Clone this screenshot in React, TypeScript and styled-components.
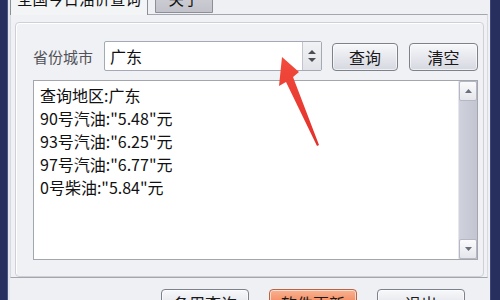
import React from "react";
import styled, { createGlobalStyle } from "styled-components";

const Global = createGlobalStyle`
  html, body { margin: 0; padding: 0; overflow: hidden; background: #eef0f3; }
  * { box-sizing: border-box; }
`;

const FONT = `"Noto Sans CJK SC", "Noto Sans", sans-serif`;

const Root = styled.div`
  position: relative;
  width: 500px;
  height: 300px;
  overflow: hidden;
  font-family: ${FONT};
`;

const Window = styled.div`
  display: flex;
  width: 500px;
  height: 320px;
  margin-top: -14px;
`;

const Frame = styled.div<{ $w: number; $side: "l" | "r" }>`
  width: ${(p) => p.$w}px;
  flex: none;
  background: #262f5e;
  ${(p) =>
    p.$side === "l"
      ? "box-shadow: inset -1px 0 0 #4b5688;"
      : "box-shadow: inset 1px 0 0 #3e4878;"}
`;

const Body = styled.div`
  flex: 1;
  display: flex;
  flex-direction: column;
  background: #eef0f3;
  box-shadow: inset 2px 0 0 #e4e6ec;
`;

const TabStrip = styled.div`
  display: flex;
  align-items: flex-end;
  gap: 7px;
  padding-left: 2px;
  height: 28px;
`;

const Tab = styled.div<{ $active?: boolean; $w: number }>`
  position: relative;
  z-index: 1;
  width: ${(p) => p.$w}px;
  height: ${(p) => (p.$active ? 29 : 25)}px;
  margin-bottom: ${(p) => (p.$active ? -1 : 1)}px;
  display: flex;
  justify-content: center;
  padding-top: ${(p) => (p.$active ? 2 : 0)}px;
  font-size: 15.5px;
  line-height: 18px;
  color: #111;
  border: 1px solid #8c8f98;
  border-bottom: ${(p) => (p.$active ? "none" : "1px solid #8c8f98")};
  border-radius: 3px 3px 0 0;
  background: ${(p) =>
    p.$active ? "#f3f4f6" : "linear-gradient(#d3d4da, #c2c3ca)"};
`;

const TabPage = styled.div`
  margin: 0 2px;
  height: 264px;
  border: 1px solid #a3a6ae;
  border-left-color: #d7dae0;
  border-right-color: #d7dae0;
  background: #f0f1f4;
  padding: 7px 3px 0 4px;
`;

const Group = styled.div`
  height: 255px;
  border: 1px solid #cdd0d6;
  border-radius: 4px;
  box-shadow: inset 1px 1px 0 #ffffff;
  padding: 18px 5px 16px 17px;
  display: flex;
  flex-direction: column;
`;

const Row = styled.div`
  display: flex;
  align-items: center;
  height: 30px;
`;

const Label = styled.span`
  width: 71px;
  flex: none;
  font-size: 15px;
  color: #505258;
  line-height: 30px;
  padding-top: 2px;
`;

const Combo = styled.div`
  flex: 1;
  height: 30px;
  display: flex;
  background: #fff;
  border: 1px solid #a4a9b5;
  border-radius: 2px;
`;

const ComboText = styled.span`
  flex: 1;
  padding-left: 5px;
  font-size: 16px;
  line-height: 28px;
  color: #111;
`;

const Spinner = styled.div`
  width: 19px;
  display: flex;
  align-items: center;
  justify-content: center;
  background: linear-gradient(#f1f2f5, #e1e3e8);
  border-left: 1px solid #c2c5cc;
`;

const Btn = styled.button<{ $w: number; $orange?: boolean }>`
  width: ${(p) => p.$w}px;
  height: 28px;
  flex: none;
  font-family: ${FONT};
  font-size: 16px;
  line-height: 26px;
  padding: 0;
  color: #1a1a1a;
  border: 1px solid ${(p) => (p.$orange ? "#b86447" : "#7d818b")};
  border-radius: 4px;
  background: ${(p) =>
    p.$orange
      ? "linear-gradient(#f9b291, #f48a60 50%, #ef6f44)"
      : "linear-gradient(#f7f8fa, #e7e8ee 50%, #d6d8e0)"};
  box-shadow: inset 0 0 0 1px rgba(255, 255, 255, 0.6);
`;

const TopBtns = styled.div`
  display: flex;
  gap: 11px;
  margin-left: 10px;
  padding-top: 2px;
`;

const TextArea = styled.div`
  margin-top: 9px;
  height: 180px;
  display: flex;
  background: #fff;
  border: 1px solid #a3a6ad;
`;

const Lines = styled.div`
  flex: 1;
  padding: 3px 6px;
  font-size: 16px;
  line-height: 23px;
  color: #111;
`;

const ScrollBar = styled.div`
  width: 19px;
  display: flex;
  flex-direction: column;
  background: linear-gradient(90deg, #cfd2dc, #c3c6d2);
  border-left: 1px solid #e6e7ec;
`;

const ScrollBtn = styled.div`
  height: 20px;
  display: flex;
  align-items: center;
  justify-content: center;
  background: linear-gradient(#fbfbfc, #e4e6eb);
  border: 1px solid #b5b8c2;
  border-radius: 2px;
`;

const Track = styled.div`
  flex: 1;
`;

const Footer = styled.div`
  display: flex;
  justify-content: flex-end;
  gap: 20px;
  padding: 11px 25px 0 0;
`;

const Overlay = styled.svg`
  position: absolute;
  left: 0;
  top: 0;
  pointer-events: none;
`;

const Tri = ({ up }: { up?: boolean }) => (
  <svg width="7" height="4" viewBox="0 0 7 4">
    <path d={up ? "M0 4 L3.5 0 L7 4 Z" : "M0 0 L3.5 4 L7 0 Z"} fill="#6b6f7a" />
  </svg>
);

const lines = [
  "查询地区:广东",
  '90号汽油:"5.48"元',
  '93号汽油:"6.25"元',
  '97号汽油:"6.77"元',
  '0号柴油:"5.84"元',
];

export default function App() {
  return (
    <Root>
      <Global />
      <Window>
        <Frame $w={8} $side="l" />
        <Body>
          <TabStrip>
            <Tab $active $w={138}>全国今日油价查询</Tab>
            <Tab $w={58}>关于</Tab>
          </TabStrip>
          <TabPage>
            <Group>
              <Row>
                <Label>省份城市</Label>
                <Combo>
                  <ComboText>广东</ComboText>
                  <Spinner>
                    <svg width="8" height="12" viewBox="0 0 8 12">
                      <path d="M0 4 L4 0 L8 4 Z" fill="#4a4d55" />
                      <path d="M0 8 L4 12 L8 8 Z" fill="#4a4d55" />
                    </svg>
                  </Spinner>
                </Combo>
                <TopBtns>
                  <Btn $w={66}>查询</Btn>
                  <Btn $w={69}>清空</Btn>
                </TopBtns>
              </Row>
              <TextArea>
                <Lines>
                  {lines.map((l) => (
                    <div key={l}>{l}</div>
                  ))}
                </Lines>
                <ScrollBar>
                  <ScrollBtn>
                    <Tri up />
                  </ScrollBtn>
                  <Track />
                  <ScrollBtn>
                    <Tri />
                  </ScrollBtn>
                </ScrollBar>
              </TextArea>
            </Group>
          </TabPage>
          <Footer>
            <Btn $w={88}>备用查询</Btn>
            <Btn $w={88} $orange>软件更新</Btn>
            <Btn $w={88}>退出</Btn>
          </Footer>
        </Body>
        <Frame $w={10} $side="r" />
      </Window>
      <Overlay width="500" height="300" viewBox="0 0 500 300">
        <defs>
          <linearGradient id="ar" x1="0" y1="0" x2="0" y2="1">
            <stop offset="0" stopColor="#f24a3c" />
            <stop offset="1" stopColor="#e2302a" />
          </linearGradient>
        </defs>
        <polygon
          points="282,57 299,72 293,77 319,145 317,146 286,82 279,86"
          fill="url(#ar)"
        />
      </Overlay>
    </Root>
  );
}
